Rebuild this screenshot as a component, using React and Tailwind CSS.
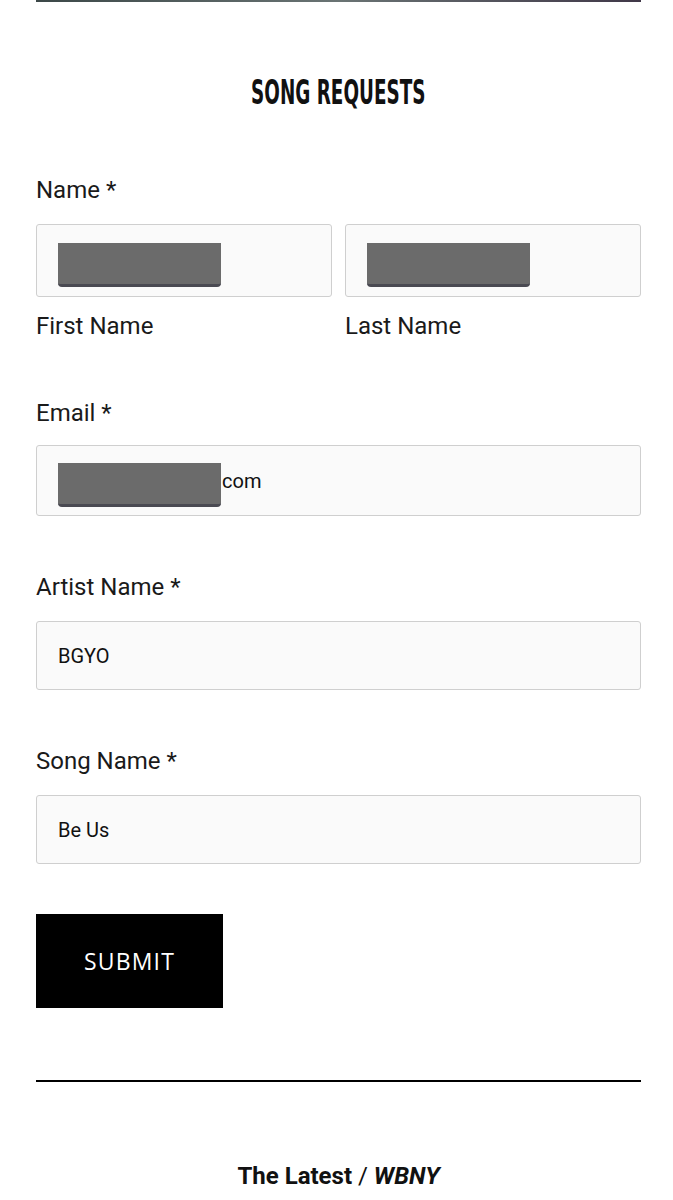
import React from 'react';

const Redact = () => (
  <span className="inline-block mt-[8px] w-[163px] h-[44px] bg-[#6b6b6b] rounded-b-[4px] border-b-[3px] border-[#4a4a52] align-middle" />
);

const Field = ({ children, className = '' }) => (
  <div className={`bg-[#fafafa] border border-[#cfcfcf] rounded-[3px] flex items-center pl-[21px] text-[20px] text-[#111] ${className}`}>
    {children}
  </div>
);

const Label = ({ children, className = '' }) => (
  <p className={`text-[24px] text-[#1a1a1a] leading-none ${className}`}>{children}</p>
);

export default function App() {
  return (
    <div className="bg-white w-[673px] h-[1200px] overflow-hidden pl-[36px] pr-[32px]" style={{ fontFamily: 'Roboto, "Liberation Sans", sans-serif' }}>
      <div className="h-[2px] bg-gradient-to-r from-[#3c4848] via-[#6a7474] to-[#403848]" />

      <h2
        className="mt-[73px] text-center text-[34px] font-bold leading-none text-[#111]"
        style={{ fontFamily: '"DejaVu Sans Condensed", "DejaVu Sans", sans-serif' }}
      >
        <span className="inline-block scale-x-[0.6]">SONG REQUESTS</span>
      </h2>

      <Label className="mt-[69px]">Name *</Label>
      <div className="mt-[22px] grid grid-cols-2 gap-[13px]">
        <div>
          <Field className="h-[73px]"><Redact /></Field>
          <Label className="mt-[17px]">First Name</Label>
        </div>
        <div>
          <Field className="h-[73px]"><Redact /></Field>
          <Label className="mt-[17px]">Last Name</Label>
        </div>
      </div>

      <Label className="mt-[63px]">Email *</Label>
      <Field className="mt-[20px] h-[71px]"><Redact /><span className="ml-[1px]">com</span></Field>

      <Label className="mt-[59px]">Artist Name *</Label>
      <Field className="mt-[22px] h-[69px]">BGYO</Field>

      <Label className="mt-[59px]">Song Name *</Label>
      <Field className="mt-[22px] h-[69px]">Be Us</Field>

      <button
        className="mt-[50px] w-[187px] h-[94px] bg-black text-white text-[23px] tracking-[1.2px] font-medium"
        style={{ fontFamily: '"Open Sans", sans-serif' }}
      >
        SUBMIT
      </button>

      <div className="mt-[72px] h-[2px] bg-black" />

      <p className="mt-[76px] text-center text-[24px] font-bold text-[#111]">
        The Latest <span className="font-normal">/</span> <em className="italic">WBNY</em>
      </p>
    </div>
  );
}
